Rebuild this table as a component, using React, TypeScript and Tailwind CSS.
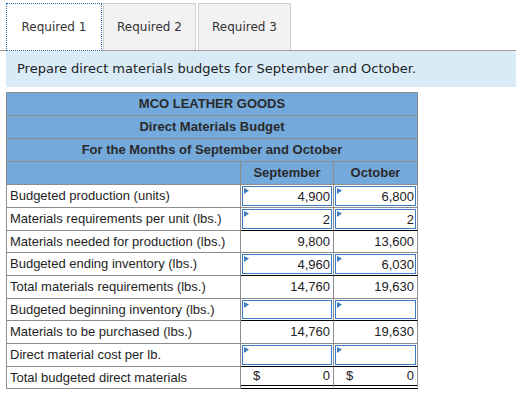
import React from 'react';

type Row = {
  label: string;
  sep?: string;
  oct?: string;
  input?: boolean;
  h: string;
  underline?: boolean;
  total?: boolean;
};

const rows: Row[] = [
  { label: 'Budgeted production (units)', sep: '4,900', oct: '6,800', input: true, h: 'h-[23px]' },
  { label: 'Materials requirements per unit (lbs.)', sep: '2', oct: '2', input: true, h: 'h-[23px]', underline: true },
  { label: 'Materials needed for production (lbs.)', sep: '9,800', oct: '13,600', h: 'h-[22px]' },
  { label: 'Budgeted ending inventory (lbs.)', sep: '4,960', oct: '6,030', input: true, h: 'h-[23px]', underline: true },
  { label: 'Total materials requirements (lbs.)', sep: '14,760', oct: '19,630', h: 'h-[23px]' },
  { label: 'Budgeted beginning inventory (lbs.)', sep: '', oct: '', input: true, h: 'h-[22px]', underline: true },
  { label: 'Materials to be purchased (lbs.)', sep: '14,760', oct: '19,630', h: 'h-[23px]' },
  { label: 'Direct material cost per lb.', sep: '', oct: '', input: true, h: 'h-[23px]', underline: true },
  { label: 'Total budgeted direct materials', sep: '0', oct: '0', h: 'h-[22px]', total: true },
];

function Flag() {
  return (
    <svg width="5" height="6" viewBox="0 0 5 6" className="absolute left-[1px] top-[1px]">
      <polygon points="0,0 5,2.5 0,6" fill="#3c7cc7" />
    </svg>
  );
}

function ValueCell({ row, value, width }: { row: Row; value?: string; width: string }) {
  const bottom = row.total
    ? 'border-b-[4px] border-double border-b-black'
    : row.underline
    ? 'border-b border-b-black'
    : 'border-b border-b-[#8c8c8c]';
  return (
    <div className={`${width} ${bottom} border-r border-r-[#8c8c8c] flex`}>
      {row.input ? (
        <div className="relative flex-1 m-[1px] border border-[#3c7cc7] bg-white">
          <Flag />
          <input
            readOnly
            defaultValue={value}
            className="w-full h-full bg-transparent text-right pr-[1px] text-[13px] text-[#222] outline-none font-['Liberation_Sans',Arial,sans-serif]"
          />
        </div>
      ) : (
        <div className="flex-1 flex items-center justify-between px-[3px] text-[13px] text-[#222]">
          <span className={row.total ? 'pl-[9px]' : ''}>{row.total ? '$' : ''}</span>
          <span>{value}</span>
        </div>
      )}
    </div>
  );
}

export default function App() {
  return (
    <div className="w-[516px] h-[398px] bg-white overflow-hidden font-['DejaVu_Sans',Verdana,sans-serif]">
      {/* tabs */}
      <div className="h-[51px] border-b border-[#a0a0a0] flex items-start pl-[6px] pt-[3px] text-[12px] text-[#333]">
        <div className="relative z-10 w-[96px] h-[48px] border border-dotted border-[#2e6db4] bg-white flex items-center justify-center">
          Required 1
        </div>
        <div className="ml-[1px] w-[93px] h-[47px] border border-b-0 border-[#cfcfcf] bg-[#f2f2f2] flex items-center justify-center">
          Required 2
        </div>
        <div className="ml-[2px] w-[93px] h-[47px] border border-b-0 border-[#cfcfcf] bg-[#f2f2f2] flex items-center justify-center">
          Required 3
        </div>
      </div>

      {/* instructions */}
      <div className="ml-[6px] h-[36px] bg-[#d9ebf7] flex items-center pl-[11px] text-[13px] text-[#222]">
        Prepare direct materials budgets for September and October.
      </div>

      {/* budget table */}
      <div className="ml-[6px] mt-[5px] w-[412px] border-l border-t border-[#8c8c8c] text-[13px] text-[#1e1e1e] font-['Liberation_Sans',Arial,sans-serif]">
        {['MCO LEATHER GOODS', 'Direct Materials Budget', 'For the Months of September and October'].map((t) => (
          <div
            key={t}
            className="h-[23px] bg-[#74a9dc] border-b border-r border-[#8c8c8c] flex items-center justify-center font-bold text-[#2a2a2a]"
          >
            {t}
          </div>
        ))}
        <div className="h-[23px] flex bg-[#74a9dc] font-bold text-[#2a2a2a]">
          <div className="w-[234px] border-b border-r border-[#8c8c8c]" />
          <div className="w-[93px] border-b border-r border-[#8c8c8c] flex items-center justify-center">September</div>
          <div className="flex-1 border-b border-r border-[#8c8c8c] flex items-center justify-center">October</div>
        </div>

        {rows.map((r) => (
          <div key={r.label} className={`${r.h} flex`}>
            <div className="w-[234px] border-b border-r border-[#8c8c8c] flex items-center pl-[3px]">{r.label}</div>
            <ValueCell row={r} value={r.sep} width="w-[93px]" />
            <ValueCell row={r} value={r.oct} width="flex-1" />
          </div>
        ))}
      </div>
    </div>
  );
}
